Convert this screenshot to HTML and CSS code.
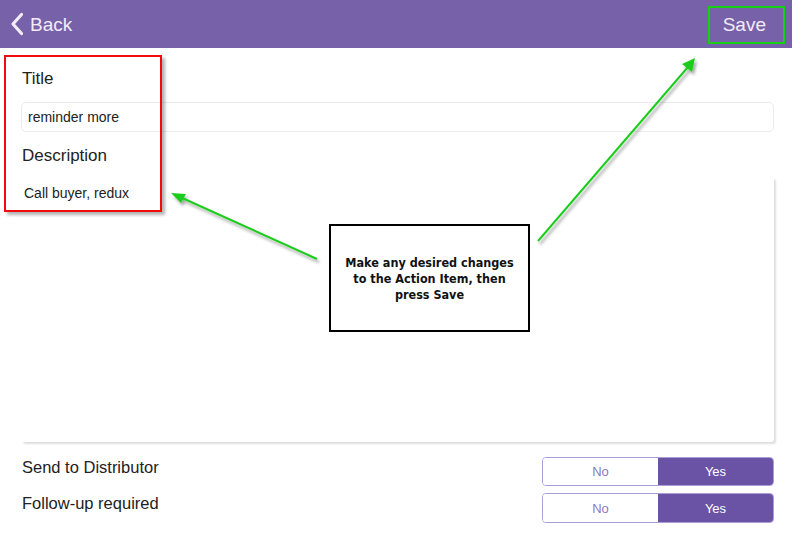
FILE: index.html
```html
<!DOCTYPE html>
<html>
<head>
<meta charset="utf-8">
<link rel="stylesheet" href="styles.css">
</head>
<body>
<div class="screen">
  <header class="navbar">
    <div class="back">
      <svg class="chev" width="14" height="24" viewBox="0 0 14 24"><path d="M11.5 2.5 L3 12 L11.5 21.5" fill="none" stroke="#f1ecf8" stroke-width="3.2" stroke-linecap="round" stroke-linejoin="round"/></svg>
      <span>Back</span>
    </div>
    <div class="save">Save</div>
  </header>
  <main class="form">
    <div class="label title-label">Title</div>
    <div class="input">reminder more</div>
    <div class="label desc-label">Description</div>
    <div class="textarea">Call buyer, redux</div>
    <div class="row first">
      <div class="row-label">Send to Distributor</div>
      <div class="seg"><div class="opt no">No</div><div class="opt yes">Yes</div></div>
    </div>
    <div class="row">
      <div class="row-label">Follow-up required</div>
      <div class="seg"><div class="opt no">No</div><div class="opt yes">Yes</div></div>
    </div>
  </main>

  <div class="hl-red"></div>
  <div class="hl-green"></div>
  <svg class="arrows" width="792" height="537" viewBox="0 0 792 537">
    <defs>
      <filter id="sh" x="-10%" y="-10%" width="120%" height="120%">
        <feDropShadow dx="2" dy="3" stdDeviation="1.5" flood-color="#000" flood-opacity="0.35"/>
      </filter>
    </defs>
    <g filter="url(#sh)" stroke="#1fcc1f" fill="#1fcc1f">
      <line x1="317" y1="259" x2="180" y2="197" stroke-width="2"/>
      <polygon points="171,193 186,194 181,203" stroke="none"/>
      <line x1="538" y1="241" x2="688" y2="67" stroke-width="2"/>
      <polygon points="695,58 692,72 682,64" stroke="none"/>
    </g>
  </svg>
  <div class="callout">Make any desired changes<br>to the Action Item, then<br>press Save</div>
</div>
</body>
</html>
```
FILE: styles.css
```css
* { box-sizing: border-box; }
html, body { margin: 0; padding: 0; background: #fff; }
body { font-family: "Liberation Sans", Arial, sans-serif; color: #222; }
.screen { position: relative; width: 792px; height: 537px; overflow: hidden; }

.navbar {
  height: 48px;
  background: #7762a9;
  display: flex;
  align-items: center;
  justify-content: space-between;
  padding: 0 26px 0 10px;
  color: #f1ecf8;
  font-size: 19px;
}
.back { display: flex; align-items: center; gap: 6px; }
.back span { margin-top: 1px; }
.chev { display: block; }
.save { margin-top: 1px; }

.form { padding: 0 18px 0 21px; display: flex; flex-direction: column; }
.label { font-size: 17px; line-height: 22px; height: 22px; padding-left: 1px; color: #222; }
.title-label { margin-top: 20px; margin-bottom: 12px; }
.input {
  height: 30px;
  border: 1px solid #ececec;
  border-radius: 5px;
  font-size: 14px;
  line-height: 28px;
  padding-left: 6px;
  color: #222;
}
.desc-label { margin-top: 13px; margin-bottom: 10px; }
.textarea {
  height: 265px;
  box-shadow: 2px 2px 2px rgba(0,0,0,0.13);
  border-radius: 3px;
  font-size: 14px;
  padding: 8px 0 0 3px;
  color: #222;
}
.row { display: flex; justify-content: space-between; align-items: flex-start; height: 30px; margin-top: 7px; }
.row.first { margin-top: 15px; height: 29px; }
.row-label { font-size: 16.5px; line-height: 20px; padding-left: 1px; color: #222; }
.seg {
  width: 232px;
  height: 100%;
  display: flex;
  border: 1px solid #ab9dd8;
  border-radius: 4px;
  overflow: hidden;
  font-size: 13px;
}
.opt { flex: 1; display: flex; align-items: center; justify-content: center; }
.opt.no { background: #fff; color: #8b7bbd; }
.opt.yes { background: #6a53a5; color: #fff; }

.hl-red {
  position: absolute;
  left: 4px; top: 55px; width: 158px; height: 157px;
  border: 2px solid #f00a0a;
  box-shadow: 3px 3px 3px rgba(0,0,0,0.3);
}
.hl-green {
  position: absolute;
  left: 708px; top: 6px; width: 77px; height: 38px;
  border: 2px solid #16d016;
}
.arrows { position: absolute; left: 0; top: 0; }
.callout {
  position: absolute;
  left: 329px; top: 224px; width: 201px; height: 108px;
  border: 2px solid #000;
  background: #fff;
  font-family: "DejaVu Sans Condensed", "DejaVu Sans", sans-serif;
  font-stretch: condensed;
  font-weight: bold;
  font-size: 12.5px;
  line-height: 16px;
  text-align: center;
  padding: 29px 0 0;
  white-space: nowrap;
  color: #111;
}
```
